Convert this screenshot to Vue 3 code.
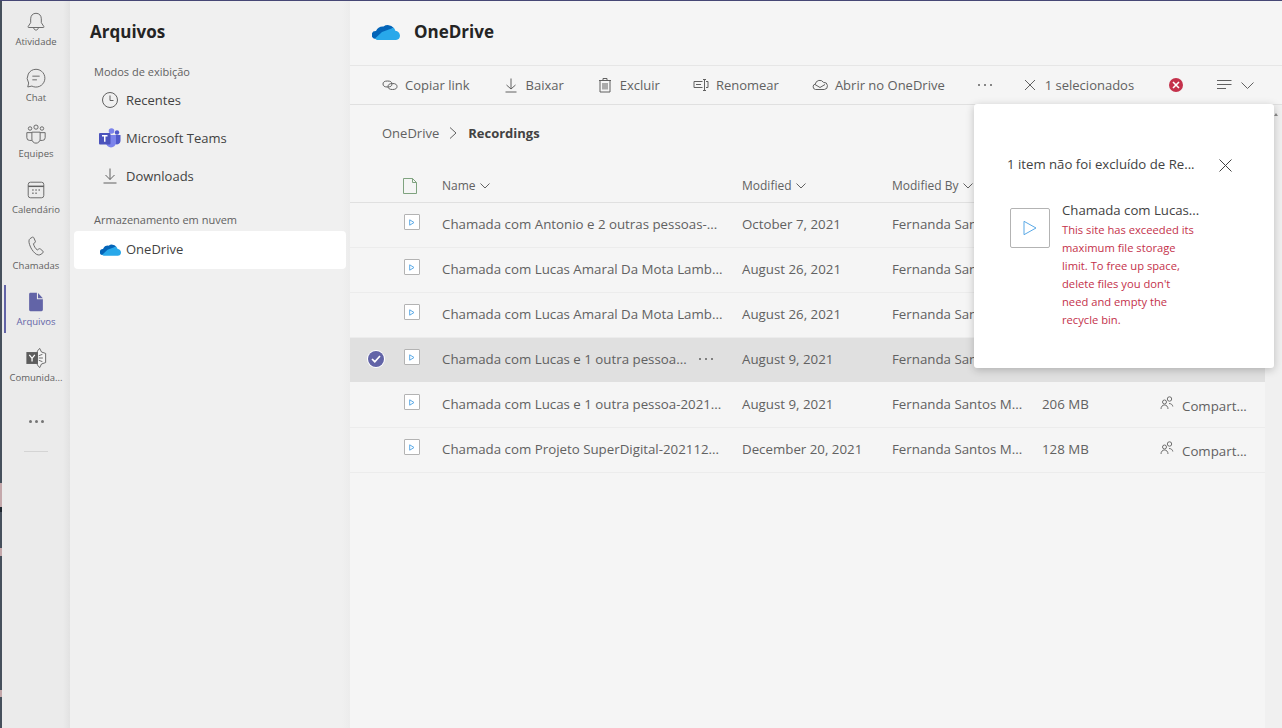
<script setup>
const railItems = [
  { label: 'Atividade', icon: 'bell' },
  { label: 'Chat', icon: 'chat' },
  { label: 'Equipes', icon: 'teams' },
  { label: 'Calendário', icon: 'cal' },
  { label: 'Chamadas', icon: 'phone' },
  { label: 'Arquivos', icon: 'file', active: true },
  { label: 'Comunida...', icon: 'yammer' }
]
const rows = [
  { name: 'Chamada com Antonio e 2 outras pessoas-...', date: 'October 7, 2021', by: 'Fernanda Santos M...', covered: true },
  { name: 'Chamada com Lucas Amaral Da Mota Lamb...', date: 'August 26, 2021', by: 'Fernanda Santos M...', covered: true },
  { name: 'Chamada com Lucas Amaral Da Mota Lamb...', date: 'August 26, 2021', by: 'Fernanda Santos M...', covered: true },
  { name: 'Chamada com Lucas e 1 outra pessoa...', date: 'August 9, 2021', by: 'Fernanda Santos M...', covered: true, selected: true },
  { name: 'Chamada com Lucas e 1 outra pessoa-2021...', date: 'August 9, 2021', by: 'Fernanda Santos M...', size: '206 MB' },
  { name: 'Chamada com Projeto SuperDigital-202112...', date: 'December 20, 2021', by: 'Fernanda Santos M...', size: '128 MB' }
]
const actions = [
  { label: 'Copiar link', icon: 'link' },
  { label: 'Baixar', icon: 'down' },
  { label: 'Excluir', icon: 'trash' },
  { label: 'Renomear', icon: 'rename' },
  { label: 'Abrir no OneDrive', icon: 'cloud' }
]
</script>

<template>
  <div class="app">
    <div class="edge"></div>
    <nav class="rail">
      <div v-for="item in railItems" :key="item.label" class="rail-item" :class="{ active: item.active }">
        <svg class="rail-icon" viewBox="0 0 24 24" fill="none" stroke="#616161" stroke-width="1">
          <template v-if="item.icon === 'bell'">
            <path d="M12 2.5c-3.600 0-5.800 2.600-5.800 6v4.200L3.400 17c-.3.600 0 1 .6 1h16c.6 0 .9-.4.6-1l-2.800-4.300V8.500c0-3.400-2.200-6-5.800-6z" />
            <path d="M9.500 18.500c.3 1.500 1.200 2.300 2.500 2.300s2.200-.8 2.500-2.300" />
          </template>
          <template v-else-if="item.icon === 'chat'">
            <path d="M12 2.500a9.700 9.700 0 1 1-4.500 18.300L3 21.800l1-4.300A9.700 9.700 0 0 1 12 2.500z" />
            <path d="M8 10h8M8 14h5" />
          </template>
          <template v-else-if="item.icon === 'teams'">
            <circle cx="12" cy="4.500" r="2.300" /><circle cx="5.500" cy="6" r="1.900" /><circle cx="18.500" cy="6" r="1.900" />
            <path d="M7.500 10h9v7.500a4.500 4.500 0 0 1-9 0z" />
            <path d="M7.500 19H5a3 3 0 0 1-3-3v-5.500h5.500M16.500 19H19a3 3 0 0 0 3-3v-5.500h-5.500" />
          </template>
          <template v-else-if="item.icon === 'cal'">
            <rect x="3.500" y="3.500" width="17" height="17" rx="2.500" />
            <path d="M3.500 8h17" stroke-width="1.600" />
            <path d="M8 12h1.300M11.400 12h1.300M14.800 12h1.300M8 15.500h1.300M11.400 15.500h1.300" stroke-width="1.500" />
          </template>
          <template v-else-if="item.icon === 'phone'">
            <path d="M7.800 2.500 5.500 4C4 5 4 7.500 5 10.500c1.200 3.700 3.300 7 6 9.500 2.300 2 4.800 2.300 6.500 1l2-1.600c.6-.6.600-1.200 0-1.800l-2.800-2.400c-.5-.4-1-.4-1.600 0l-1.700 1.100c-2-1.300-3.700-4.300-4.200-6.800l1.600-1.100c.6-.4.700-1 .5-1.600L9.600 3c-.3-.7-1-.9-1.800-.5z" />
          </template>
          <template v-else-if="item.icon === 'file'">
            <path d="M4.500 3.500C4.500 2.700 5.100 2 5.900 2H13v7h6.500v11.500c0 .8-.7 1.500-1.500 1.500H5.900c-.8 0-1.400-.7-1.400-1.500z" fill="#6264a7" stroke="none" />
            <path d="M14.200 2.200v5.600h5.300z" fill="#6264a7" stroke="none" />
          </template>
          <template v-else>
            <path d="M13.500 4.500 16 1.500l2 4 4.500 1.500v10L18 18.500l-2 4-2.500-3z" fill="#f4f4f4" stroke-width="1" />
            <path d="M15 9.500l4-1.500M15 12h4.500M15 14.500l4 1.500" stroke-width="1" />
            <path d="M1.500 5.500h12.500v13H1.500z" fill="#5c5c5c" stroke="none" />
            <path d="M4.700 8.500l3 3.800 3-3.800M7.700 12.300V15.800" stroke="#fff" stroke-width="1.400" />
          </template>
        </svg>
        <span class="rail-label">{{ item.label }}</span>
      </div>
      <div class="rail-more"><i></i><i></i><i></i></div>
      <div class="rail-divider"></div>
    </nav>

    <aside class="side">
      <h1 class="side-title">Arquivos</h1>
      <div class="side-group">Modos de exibição</div>
      <div class="side-item">
        <span class="side-icon">
          <svg width="18" height="18" viewBox="0 0 18 18" fill="none" stroke="#616161"><circle cx="9" cy="9" r="7.500" /><path d="M9 4.500V9.500H12.500" /></svg>
        </span>Recentes
      </div>
      <div class="side-item">
        <span class="side-icon">
          <svg width="22" height="20" viewBox="0 0 22 20">
            <circle cx="18" cy="4.500" r="2.200" fill="#5059c9" />
            <circle cx="12.500" cy="3" r="2.800" fill="#7b83eb" />
            <path d="M14 7h7.500v6a3.500 3.500 0 0 1-5.500 2.800z" fill="#5059c9" />
            <path d="M7 7h10v7.500a5 5 0 0 1-10 0z" fill="#7b83eb" />
            <rect x="0" y="5" width="11.500" height="11.500" rx="1" fill="#4b53bc" />
            <path d="M3 7.800h5.500M5.750 7.800v6" stroke="#fff" stroke-width="1.500" fill="none" />
          </svg>
        </span>Microsoft Teams
      </div>
      <div class="side-item">
        <span class="side-icon">
          <svg width="18" height="18" viewBox="0 0 18 18" fill="none" stroke="#616161"><path d="M9 1.500V12.500M4.500 8l4.500 4.500L13.500 8M2.500 16H15.500" /></svg>
        </span>Downloads
      </div>
      <div class="side-group second">Armazenamento em nuvem</div>
      <div class="side-item current">
        <span class="side-icon">
          <svg width="21" height="14" viewBox="0 0 28 18"><path d="M11.500 4.500A7.500 7.500 0 0 1 21.500 5.700L14 11 3.500 17A4 4 0 0 1 4 9a7.500 7.500 0 0 1 7.500-4.500z" fill="#0364b8" /><path d="M21.500 5.700L10 10 3 16.500c.6.900 1.500 1.500 3 1.500h18c2.500 0 4-2 4-4.200 0-3-2.500-4.800-4.500-4.700-.4-1.500-1-2.500-2-3.600z" fill="#28a8ea" /></svg>
        </span>OneDrive
      </div>
    </aside>

    <main class="main">
      <header class="head">
        <svg width="28" height="18" viewBox="0 0 28 18"><path d="M11.500 4.500A7.500 7.500 0 0 1 21.500 5.700L14 11 3.500 17A4 4 0 0 1 4 9a7.500 7.500 0 0 1 7.500-4.500z" fill="#0364b8" /><path d="M21.500 5.700L10 10 3 16.500c.6.900 1.500 1.500 3 1.500h18c2.500 0 4-2 4-4.200 0-3-2.500-4.800-4.500-4.700-.4-1.500-1-2.500-2-3.600z" fill="#28a8ea" /></svg>
        <span class="head-title">OneDrive</span>
      </header>

      <div class="toolbar">
        <div v-for="a in actions" :key="a.label" class="tool">
          <svg width="16" height="16" viewBox="0 0 16 16" fill="none" stroke="#616161">
            <template v-if="a.icon === 'link'"><ellipse cx="5.500" cy="7" rx="4.500" ry="3" /><ellipse cx="10.500" cy="9.500" rx="4.500" ry="3" /></template>
            <template v-else-if="a.icon === 'down'"><path d="M8 1.500V12M3.500 8 8 12l4.500-4M2.500 15h11" /></template>
            <template v-else-if="a.icon === 'trash'"><path d="M2 3.500h12M6 3.500V1.500h4v2M3 3.500v11.500h10V3.500M6 6v6.500M8 6v6.500M10 6v6.500" /></template>
            <template v-else-if="a.icon === 'rename'"><path d="M9.500 4.500H1v6h8.500M3 7.500h5M11.500 2.500v11M10 2.500h3M10 13.500h3M13 4.500h2v6h-2" /></template>
            <template v-else><path d="M3.500 12.500a2.800 2.800 0 0 1-.2-5.500 4.500 4.500 0 0 1 8.200-1.600 3.500 3.500 0 0 1 .8 7.100zM3 7.500l5 3 5-3" /></template>
          </svg>
          <span>{{ a.label }}</span>
        </div>
        <div class="tool-more"><i></i><i></i><i></i></div>
        <div class="tool-sel">
          <svg width="12" height="12" viewBox="0 0 12 12" fill="none" stroke="#616161"><path d="M1 1l10 10M11 1 1 11" /></svg>
          <span>1 selecionados</span>
        </div>
        <span class="err-dot">
          <svg width="8" height="8" viewBox="0 0 8 8" fill="none" stroke="#fff" stroke-width="1.600"><path d="M1 1l6 6M7 1 1 7" /></svg>
        </span>
        <div class="tool-sort">
          <svg width="15" height="10" viewBox="0 0 15 10" fill="none" stroke="#616161"><path d="M0 .5h14.500M0 4.500h14.500M0 8.500h9" /></svg>
          <svg width="13" height="7" viewBox="0 0 13 7" fill="none" stroke="#616161"><path d="M.5.500 6.500 6.500 12.500.5" /></svg>
        </div>
      </div>

      <div class="crumbs">
        <span>OneDrive</span>
        <svg width="9" height="12" viewBox="0 0 9 12" fill="none" stroke="#616161"><path d="M1 .5 7 6 1 11.500" /></svg>
        <b>Recordings</b>
      </div>

      <div class="list">
        <div class="row header">
          <span class="c-check"></span>
          <span class="c-icon">
            <svg width="14" height="16" viewBox="0 0 14 16" fill="none" stroke="#7fa37f"><path d="M.5.500h9l4 4v11H.5zM9.500.5v4h4" /></svg>
          </span>
          <span class="c-name hd">Name <svg width="10" height="6" viewBox="0 0 10 6" fill="none" stroke="#616161"><path d="M.5.500 5 5l4.500-4.500" /></svg></span>
          <span class="c-date hd">Modified <svg width="10" height="6" viewBox="0 0 10 6" fill="none" stroke="#616161"><path d="M.5.500 5 5l4.500-4.500" /></svg></span>
          <span class="c-by hd">Modified By <svg width="10" height="6" viewBox="0 0 10 6" fill="none" stroke="#616161"><path d="M.5.500 5 5l4.500-4.500" /></svg></span>
        </div>
        <div v-for="(r, i) in rows" :key="i" class="row" :class="{ selected: r.selected }">
          <span class="c-check">
            <span v-if="r.selected" class="check">
              <svg width="10" height="8" viewBox="0 0 10 8" fill="none" stroke="#fff" stroke-width="1.700"><path d="M1 4l2.800 2.700L9 1" /></svg>
            </span>
          </span>
          <span class="c-icon thumb-cell">
            <span class="thumb"><svg width="6" height="7" viewBox="0 0 6 7" fill="none" stroke="#5aa9e6"><path d="M.7.800 5 3.500.7 6.200z" /></svg></span>
          </span>
          <span class="c-name">
            <span class="name-text">{{ r.name }}</span>
            <span v-if="r.selected" class="row-more"><i></i><i></i><i></i></span>
          </span>
          <span class="c-date">{{ r.date }}</span>
          <span class="c-by" :class="{ clipped: r.covered }">{{ r.by }}</span>
          <template v-if="!r.covered">
            <span class="c-size">{{ r.size }}</span>
            <span class="c-share">
              <svg width="14" height="14" viewBox="0 0 14 14" fill="none" stroke="#616161" stroke-width=".9"><circle cx="9.500" cy="3" r="2.200" /><circle cx="4.500" cy="6" r="2" /><path d="M1 13c0-2.500 1.500-4 3.500-4S8 10.500 8 13M9 7.500c2 0 3.500 1 3.800 3" /></svg>
              <span>Compart...</span>
            </span>
          </template>
        </div>
      </div>

      <div class="scroll"><i></i></div>

      <section class="pop">
        <div class="pop-head">
          <span>1 item não foi excluído de Re...</span>
          <svg width="13" height="13" viewBox="0 0 13 13" fill="none" stroke="#424242"><path d="M.5.500l12 12M12.500.5l-12 12" /></svg>
        </div>
        <div class="pop-body">
          <span class="pop-thumb"><svg width="14" height="16" viewBox="0 0 14 16" fill="none" stroke="#5aa9e6"><path d="M1 1.300 13 8 1 14.700z" /></svg></span>
          <div class="pop-text">
            <div class="pop-name">Chamada com Lucas...</div>
            <div class="pop-err">This site has exceeded its maximum file storage limit. To free up space, delete files you don't need and empty the recycle bin.</div>
          </div>
        </div>
      </section>
    </main>
  </div>
</template>

<style>
html, body { margin: 0; overflow: hidden; }
</style>

<style scoped>
.app { display: flex; height: 728px; width: 1282px; font-family: "Open Sans", "Noto Sans", sans-serif; color: #424242; border-top: 1px solid #464775; box-sizing: border-box; background: #f5f5f5; overflow: hidden; }
.edge { width: 2px; flex: none; background: linear-gradient(to bottom, #46505c 0, #46505c 482px, #c4a8ab 482px, #c4a8ab 506px, #1f2730 506px, #1f2730 511px, #46505c 511px, #46505c 547px, #c4a8ab 547px, #c4a8ab 555px, #46505c 555px, #46505c 689px, #c4a8ab 689px, #c4a8ab 696px, #46505c 696px); }
.rail { width: 68px; flex: none; background: linear-gradient(to right, #ebebeb 61px, #e2e2e2 100%); display: flex; flex-direction: column; align-items: center; }
.rail-item { height: 56px; width: 66px; display: flex; flex-direction: column; align-items: center; justify-content: flex-start; padding-top: 10px; box-sizing: border-box; position: relative; }
.rail-icon { width: 22px; height: 22px; }
.rail-label { font-size: 9.5px; line-height: 12px; margin-top: 3px; color: #616161; white-space: nowrap; }
.rail-item.active .rail-label { color: #6264a7; }
.rail-item.active::before { content: ""; position: absolute; left: 1px; top: 4px; bottom: 4px; width: 2px; background: #6264a7; }
.rail-more { display: flex; gap: 3px; margin-top: 27px; }
.rail-more i { width: 3px; height: 3px; border-radius: 50%; background: #757575; display: block; }
.tool-more i, .row-more i { width: 2px; height: 2px; border-radius: 50%; background: #616161; display: block; }
.rail-divider { width: 24px; height: 1px; background: #d4d4d4; margin-top: 28px; }
.side { width: 280px; flex: none; background: linear-gradient(to right, #f0f0f0 272px, #ececec 100%); padding: 0 4px; box-sizing: border-box; }
.side-title { font-size: 17px; font-weight: 700; color: #242424; margin: 18px 0 0 16px; line-height: 26px; }
.side-group { font-size: 11px; line-height: 16px; color: #616161; margin: 19px 0 1px 20px; }
.side-group.second { margin: 17px 0 3px 20px; }
.side-item { height: 38px; display: flex; align-items: center; font-size: 13px; color: #424242; border-radius: 4px; width: 272px; }
.side-item.current { background: #fff; padding-bottom: 2px; box-sizing: border-box; }
.side-icon { width: 52px; display: flex; justify-content: center; padding-left: 20px; box-sizing: border-box; }
.main { flex: 1; position: relative; min-width: 0; }
.head { height: 64px; display: flex; align-items: center; gap: 14px; padding: 0 0 4px 22px; box-sizing: border-box; }
.head-title { font-size: 17px; font-weight: 700; color: #242424; }
.toolbar { height: 40px; border-top: 1px solid #e6e6e6; border-bottom: 1px solid #e0e0e0; display: flex; align-items: center; padding-left: 32px; box-sizing: border-box; font-size: 13px; color: #616161; position: relative; }
.tool { display: flex; align-items: center; gap: 7px; margin-right: 33px; white-space: nowrap; }
.tool-more { display: flex; gap: 4px; }
.tool-sel { display: flex; align-items: center; gap: 9px; margin-left: 32px; white-space: nowrap; }
.err-dot { width: 14px; height: 14px; border-radius: 50%; background: #c4314b; display: flex; align-items: center; justify-content: center; margin-left: 35px; }
.tool-sort { display: flex; align-items: center; gap: 9px; margin-left: 34px; }
.crumbs { display: flex; align-items: center; gap: 10px; font-size: 13px; padding-left: 32px; height: 56px; box-sizing: border-box; color: #616161; }
.crumbs b { color: #424242; }
.list { width: 915px; margin-top: 5px; }
.row { height: 45px; display: flex; align-items: center; font-size: 13.3px; color: #616161; border-bottom: 1px solid #ececec; box-sizing: border-box; white-space: nowrap; padding-bottom: 2px; }
.row.header { height: 37px; font-size: 12px; border-bottom: 1px solid #e0e0e0; padding: 3px 0 0; }
.row.selected { background: #e0e0e0; height: 44px; border-bottom: 0; margin-bottom: 1px; padding-bottom: 2px; }
.c-check { width: 52px; display: flex; justify-content: flex-start; padding-left: 18px; box-sizing: border-box; flex: none; }
.check { width: 16px; height: 16px; border-radius: 50%; background: #6264a7; box-shadow: 0 0 0 1px #fff; display: flex; align-items: center; justify-content: center; }
.c-icon { width: 40px; flex: none; display: flex; padding-left: 1px; box-sizing: border-box; position: relative; }
.thumb-cell { top: -2px; }
.thumb { width: 16px; height: 16px; border: 1px solid #b3b3b3; background: #fff; display: flex; align-items: center; justify-content: center; border-radius: 1px; box-sizing: border-box; margin-left: 1px; }
.c-name { width: 300px; flex: none; display: flex; align-items: center; }
.hd { display: block; }
.row-more { display: flex; gap: 4px; margin-left: 12px; }
.c-date { width: 150px; flex: none; }
.c-by { width: 150px; flex: none; }
.c-by.clipped { width: 82px; overflow: hidden; }
.c-size { width: 118px; flex: none; }
.c-share { display: flex; align-items: center; gap: 8px; padding-top: 3px; }
.c-share svg { margin-top: -6px; }
.hd svg { margin-left: 1px; vertical-align: 1px; }
.scroll { position: absolute; right: 0; top: 104px; bottom: 0; width: 17px; background: #f0f0f0; }
.scroll i { position: absolute; left: 9px; top: 8px; width: 0; height: 0; border-left: 2px solid transparent; border-right: 2px solid transparent; border-bottom: 3px solid #8a8a8a; }
.pop { position: absolute; left: 624px; top: 103px; width: 300px; height: 264px; background: #fff; border-radius: 3px; box-shadow: 0 2px 8px rgba(0,0,0,.22); padding: 51px 0 0 33px; box-sizing: border-box; }
.pop-head { display: flex; align-items: center; justify-content: space-between; font-size: 13.2px; color: #424242; width: 225px; white-space: nowrap; }
.pop-head svg { margin-top: 3px; }
.pop-body { display: flex; margin-top: 28px; padding-left: 3px; }
.pop-thumb { width: 40px; height: 40px; border: 1px solid #b3b3b3; border-radius: 2px; display: flex; align-items: center; justify-content: center; flex: none; margin-top: 7px; box-sizing: border-box; }
.pop-text { margin-left: 12px; width: 136px; }
.pop-name { font-size: 13.2px; line-height: 18px; color: #424242; white-space: nowrap; }
.pop-err { font-size: 11.2px; line-height: 18px; color: #c4314b; margin-top: 2px; }
</style>
